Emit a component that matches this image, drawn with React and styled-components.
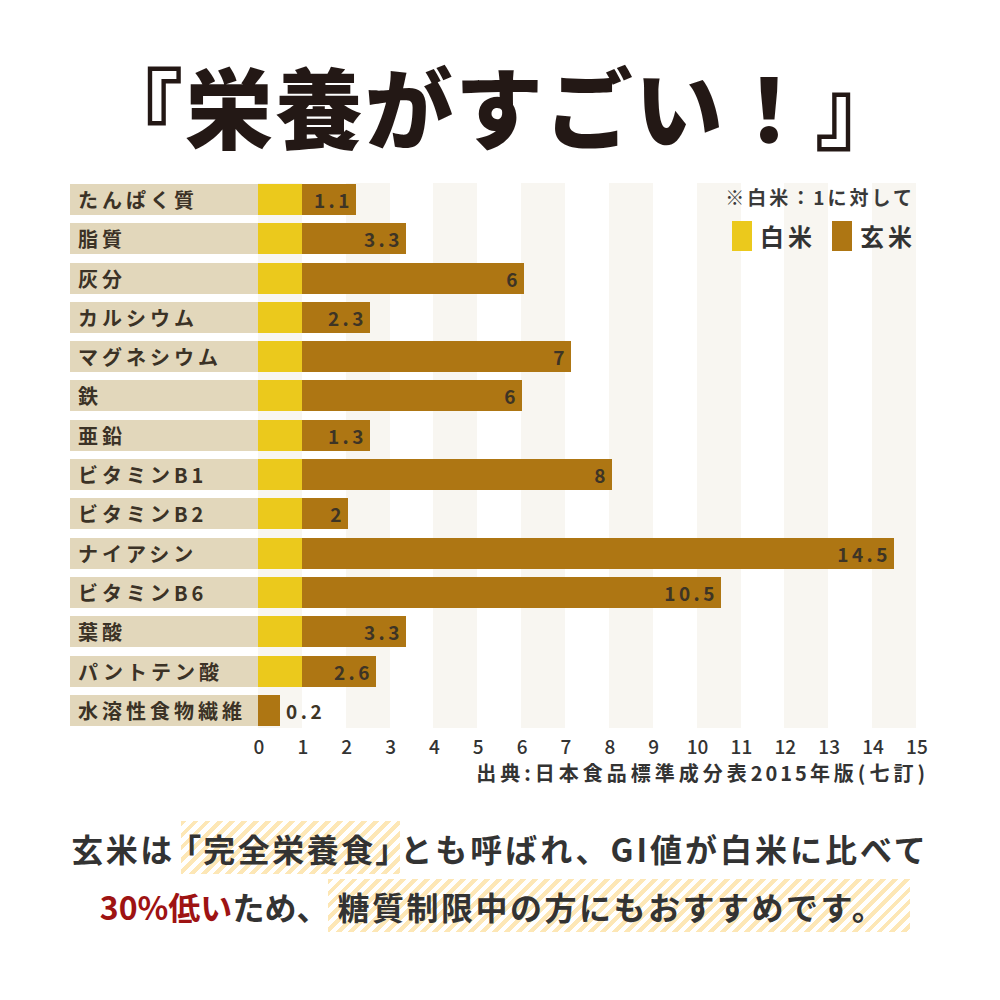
import React from "react";
import styled, { createGlobalStyle } from "styled-components";

const UNIT = 658 / 15;

const Global = createGlobalStyle`
  html, body { margin: 0; padding: 0; background: #ffffff; }
  body { font-family: "Noto Sans CJK JP", "Noto Sans", sans-serif; }
`;

const Page = styled.div`
  width: 1000px;
  height: 1000px;
  background: #ffffff;
  overflow: hidden;
  color: #333333;
`;

const Title = styled.h1`
  margin: 0;
  padding-top: 60px;
  height: 88px;
  font-family: "Noto Sans CJK JP", sans-serif;
  font-weight: 900;
  font-size: 88px;
  line-height: 88px;
  color: #231815;
  text-align: center;
  letter-spacing: 2px;
`;

const Chart = styled.div`
  position: relative;
  margin: 35px 0 0 70px;
  width: 846px;
  padding: 1px 0 2px;
  display: flex;
  flex-direction: column;
  gap: 8.3px;
  background-image: repeating-linear-gradient(
    to right,
    #f8f6f1 0,
    #f8f6f1 ${UNIT}px,
    transparent ${UNIT}px,
    transparent ${UNIT * 2}px
  );
  background-position: 188px 0;
  background-size: 658px 100%;
  background-repeat: no-repeat;
`;

const Row = styled.div`
  display: grid;
  grid-template-columns: 188px 658px;
  height: 31px;
`;

const Label = styled.div`
  background: #e2d7bb;
  padding-left: 8px;
  font-size: 20px;
  font-weight: 700;
  letter-spacing: 4px;
  line-height: 31px;
  color: #3b3226;
  white-space: nowrap;
`;

const Bars = styled.div`
  display: flex;
  align-items: stretch;
`;

const White = styled.div`
  width: 44px;
  background: #ebc91c;
`;

const Brown = styled.div`
  background: #ae7613;
  display: flex;
  justify-content: flex-end;
  align-items: center;
  padding-right: ${(p) => (p.$outside ? 0 : 3)}px;
  box-sizing: border-box;
`;

const Value = styled.span`
  font-size: 19px;
  font-weight: 700;
  letter-spacing: 3.5px;
  color: #3d3425;
  line-height: 31px;
`;

const OutsideValue = styled(Value)`
  margin-left: 6px;
`;

const Legend = styled.div`
  position: absolute;
  top: 0;
  right: 4px;
  display: flex;
  flex-direction: column;
  align-items: flex-end;
`;

const Note = styled.div`
  font-size: 19px;
  font-weight: 700;
  letter-spacing: 3px;
  line-height: 28px;
  color: #3a3a3a;
  margin-right: -3px;
`;

const LegendItems = styled.div`
  margin-top: 10px;
  display: flex;
  align-items: center;
  gap: 20px;
`;

const LegendItem = styled.div`
  display: flex;
  align-items: center;
  gap: 8px;
`;

const Swatch = styled.span`
  width: 20px;
  height: 30px;
  background: ${(p) => p.$color};
`;

const LegendText = styled.span`
  font-size: 24px;
  font-weight: 700;
  letter-spacing: 4px;
  line-height: 30px;
  color: #333333;
  margin-right: -4px;
`;

const Axis = styled.div`
  margin: 4px 0 0 ${70 + 188 - UNIT / 2 + 1}px;
  display: grid;
  grid-template-columns: repeat(16, ${UNIT}px);
  font-size: 19px;
  font-weight: 500;
  line-height: 28px;
  color: #333333;
  text-align: center;
`;

const Source = styled.div`
  width: 929px;
  text-align: right;
  font-size: 20px;
  font-weight: 700;
  letter-spacing: 4px;
  line-height: 26px;
  color: #333333;
`;

const Digits = styled.span`
  letter-spacing: 3px;
`;

const Message = styled.div`
  margin-top: 33px;
  display: flex;
  flex-direction: column;
  align-items: center;
`;

const Line = styled.div`
  height: 58px;
  display: flex;
  align-items: center;
  justify-content: center;
  font-size: 32px;
  font-weight: 700;
  letter-spacing: 2px;
  color: #333333;
  white-space: nowrap;
  padding-left: ${(p) => p.$shift || 0}px;
`;

const Part = styled.span`
  letter-spacing: ${(p) => p.$ls ?? 2}px;
  margin-right: ${(p) => p.$gap || 0}px;
`;

const Mark = styled.span`
  height: 53px;
  display: flex;
  align-items: center;
  padding: 0 ${(p) => p.$right || 0}px 0 ${(p) => p.$left || 0}px;
  letter-spacing: ${(p) => p.$ls || 2}px;
  background: repeating-linear-gradient(
    135deg,
    #fde7b6 0,
    #fde7b6 4.2px,
    #ffffff 4.2px,
    #ffffff 8.5px
  );
`;

const Bracket = styled.span`
  font-feature-settings: "palt";
`;

const Red = styled.span`
  color: #9e1313;
`;

const data = [
  { name: "たんぱく質", v: "1.1", w: 98 },
  { name: "脂質", v: "3.3", w: 148 },
  { name: "灰分", v: "6", w: 266 },
  { name: "カルシウム", v: "2.3", w: 112 },
  { name: "マグネシウム", v: "7", w: 313 },
  { name: "鉄", v: "6", w: 264 },
  { name: "亜鉛", v: "1.3", w: 112 },
  { name: "ビタミンB1", v: "8", w: 354 },
  { name: "ビタミンB2", v: "2", w: 90 },
  { name: "ナイアシン", v: "14.5", w: 636 },
  { name: "ビタミンB6", v: "10.5", w: 463 },
  { name: "葉酸", v: "3.3", w: 148 },
  { name: "パントテン酸", v: "2.6", w: 118 },
  { name: "水溶性食物繊維", v: "0.2", w: 22, only: true },
];

export default function App() {
  return (
    <Page>
      <Global />
      <Title>『栄養がすごい！』</Title>
      <Chart>
        {data.map((d) => (
          <Row key={d.name}>
            <Label>{d.name}</Label>
            <Bars>
              {d.only ? (
                <>
                  <Brown $outside style={{ width: d.w }} />
                  <OutsideValue>{d.v}</OutsideValue>
                </>
              ) : (
                <>
                  <White />
                  <Brown style={{ width: d.w - 44 }}>
                    <Value>{d.v}</Value>
                  </Brown>
                </>
              )}
            </Bars>
          </Row>
        ))}
        <Legend>
          <Note>※白米：1に対して</Note>
          <LegendItems>
            <LegendItem>
              <Swatch $color="#ebc91c" />
              <LegendText>白米</LegendText>
            </LegendItem>
            <LegendItem>
              <Swatch $color="#ae7613" />
              <LegendText>玄米</LegendText>
            </LegendItem>
          </LegendItems>
        </Legend>
      </Chart>
      <Axis>
        {Array.from({ length: 16 }, (_, i) => (
          <span key={i}>{i}</span>
        ))}
      </Axis>
      <Source>
        出典:日本食品標準成分表<Digits>2015</Digits>年版(七訂)
      </Source>
      <Message>
        <Line>
          <Part $ls={2.5} $gap={6}>玄米は</Part>
          <Mark $left={4} $right={6} $ls={2.5}>
            <Bracket>「</Bracket>完全栄養食<Bracket>」</Bracket>
          </Mark>
          <Part $ls={3}>とも呼ばれ、GI値が白米に比べて</Part>
        </Line>
        <Line $shift={10}>
          <Part $ls={0}>
            <Red>30%低い</Red>ため、
          </Part>
          <Mark $left={9} $right={24} $ls={2.5}>
            糖質制限中の方にもおすすめです。
          </Mark>
        </Line>
      </Message>
    </Page>
  );
}
